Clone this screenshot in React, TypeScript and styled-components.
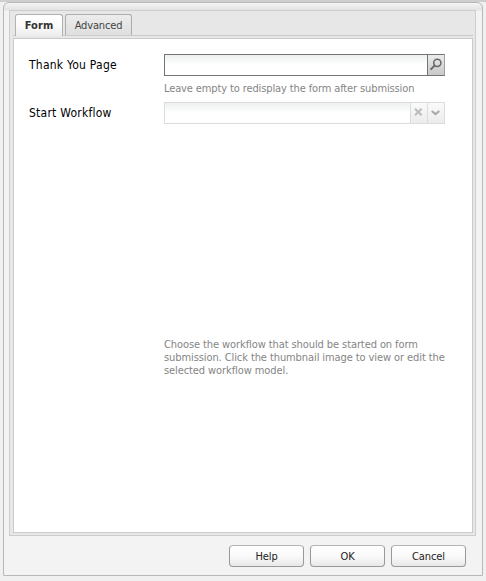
import React from "react";
import styled, { createGlobalStyle } from "styled-components";

const GlobalStyle = createGlobalStyle`
  * { box-sizing: border-box; }
  body {
    margin: 0;
    background: #f0f0f0;
    font-family: "DejaVu Sans Condensed", "DejaVu Sans", Tahoma, sans-serif;
    font-stretch: condensed;
    color: #000;
  }
`;

const Page = styled.div`
  width: 486px;
  height: 581px;
  padding: 0 3px 5px;
  border-top: 2px solid #cecece;
  background: #f0f0f0;
`;

const Dialog = styled.div`
  height: 574px;
  border: 1px solid #b8b8b8;
  border-radius: 6px 6px 1px 1px;
  background: linear-gradient(#f4f4f4 0, #e3e3e3 7px, #f3f3f3 8px);
  padding: 7px 6px 0 5px;
`;

const TabPanel = styled.div`
  height: 526px;
  border: 1px solid #cdcdcd;
  background: #e7e7e7;
  padding: 3px 2px 0 3px;
  display: flex;
  flex-direction: column;
`;

const TabStrip = styled.div`
  height: 22px;
  display: flex;
  align-items: flex-start;
  gap: 2px;
  padding-left: 2px;
  border-bottom: 1px solid #cbcbcb;
`;

const Tab = styled.button<{ $active?: boolean; $width: number }>`
  width: ${(p) => p.$width}px;
  height: ${(p) => (p.$active ? 22 : 21)}px;
  padding: ${(p) => (p.$active ? "0 0 1px" : "1px 0 0")};
  border: 1px solid ${(p) => (p.$active ? "#b2b2b2" : "#adadad")};
  border-bottom: 0;
  border-radius: 3px 3px 0 0;
  background: ${(p) =>
    p.$active ? "linear-gradient(#fff, #fafafa 50%, #ededed)" : "linear-gradient(#ececec, #dfdfdf)"};
  font: ${(p) => (p.$active ? "bold" : "normal")} 11px "DejaVu Sans Condensed", "DejaVu Sans", sans-serif;
  font-stretch: condensed;
  letter-spacing: ${(p) => (p.$active ? "0.1px" : "-0.15px")};
  color: ${(p) => (p.$active ? "#333" : "#444")};
`;

const TabBody = styled.div`
  flex: 1;
  margin: 2px 0;
  border: 1px solid #cbcbcb;
  background: #fff;
  padding: 15px 26px 0 15px;
`;

const FormRow = styled.div`
  display: grid;
  grid-template-columns: 135px 281px;
`;

const Label = styled.label`
  font-size: 12px;
  line-height: 22px;
  letter-spacing: 0.24px;
`;

const InputGroup = styled.div<{ $disabled?: boolean }>`
  height: 22px;
  display: flex;
  border: 1px solid ${(p) => (p.$disabled ? "#dcdcdc" : "#747474")};
  border-right-color: ${(p) => (p.$disabled ? "#dcdcdc" : "#a0a0a0")};
`;

const TextInput = styled.input`
  flex: 1;
  min-width: 0;
  padding: 0 3px;
  border: 0;
  outline: 0;
  background: linear-gradient(#eef0f0, #fff 10px);
  font: inherit;
`;

const Trigger = styled.button<{ $muted?: boolean }>`
  width: 17px;
  padding: 0;
  display: grid;
  place-items: center;
  border: 0;
  border-left: 1px solid ${(p) => (p.$muted ? "#dcdcdc" : "#747474")};
  background: ${(p) => (p.$muted ? "linear-gradient(#fafafa, #ececec)" : "linear-gradient(#ebebeb, #c8c8c8)")};
`;

const Hint = styled.p<{ $tall?: boolean }>`
  grid-column: 2;
  margin: ${(p) => (p.$tall ? "214px 0 0" : "6px 0 7px")};
  font-size: 11px;
  line-height: 13px;
  letter-spacing: ${(p) => (p.$tall ? "-0.09px" : "-0.12px")};
  white-space: nowrap;
  color: #858585;
`;

const Footer = styled.div`
  display: flex;
  justify-content: flex-end;
  gap: 6px;
  padding: 9px 10px 0 0;
`;

const PushButton = styled.button`
  width: 75px;
  height: 22px;
  padding: 0;
  border: 1px solid #999;
  border-top-color: #b4b4b4;
  border-radius: 4px;
  background: linear-gradient(#fff, #fafafa 50%, #e8e8e8);
  font: 11px "DejaVu Sans Condensed", "DejaVu Sans", sans-serif;
  font-stretch: condensed;
  letter-spacing: -0.1px;
  color: #222;
`;

export default function App() {
  return (
    <Page>
      <GlobalStyle />
      <Dialog>
        <TabPanel>
          <TabStrip>
            <Tab $active $width={48}>Form</Tab>
            <Tab $width={67}>Advanced</Tab>
          </TabStrip>
          <TabBody>
            <FormRow>
              <Label>Thank You Page</Label>
              <InputGroup>
                <TextInput aria-label="Thank You Page" />
                <Trigger aria-label="Browse">
                  <svg width="14" height="14" viewBox="0 0 14 14" fill="none" stroke="#666">
                    <circle cx="8.3" cy="4.8" r="3.6" strokeWidth="1.5" />
                    <path d="M5.8 7.4 1.6 11.6" strokeWidth="2" />
                  </svg>
                </Trigger>
              </InputGroup>
              <Hint>Leave empty to redisplay the form after submission</Hint>
            </FormRow>
            <FormRow>
              <Label>Start Workflow</Label>
              <InputGroup $disabled>
                <TextInput aria-label="Start Workflow" disabled />
                <Trigger $muted aria-label="Clear">
                  <svg width="10" height="10" viewBox="0 0 10 10" stroke="#bcbcbc" strokeWidth="2">
                    <path d="M1 .7 7.6 7.3M7.6 .7 1 7.3" />
                  </svg>
                </Trigger>
                <Trigger $muted aria-label="Open list">
                  <svg width="10" height="7" viewBox="0 0 10 7" fill="none" stroke="#aaa" strokeWidth="2.2">
                    <path d="M.7 1 4.5 4 8.3 1" />
                  </svg>
                </Trigger>
              </InputGroup>
              <Hint $tall>
                Choose the workflow that should be started on form
                <br />
                submission. Click the thumbnail image to view or edit the
                <br />
                selected workflow model.
              </Hint>
            </FormRow>
          </TabBody>
        </TabPanel>
        <Footer>
          <PushButton>Help</PushButton>
          <PushButton>OK</PushButton>
          <PushButton>Cancel</PushButton>
        </Footer>
      </Dialog>
    </Page>
  );
}
